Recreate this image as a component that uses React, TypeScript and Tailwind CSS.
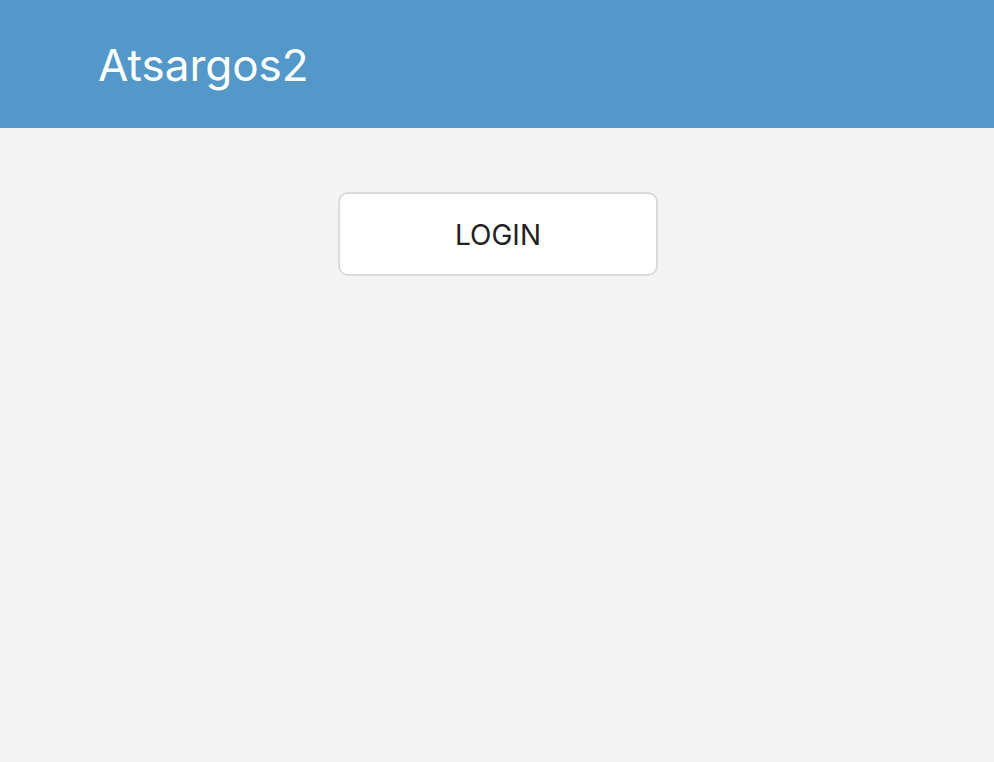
export default function App() {
  return (
    <div className="min-h-[762px] bg-[#f4f4f4] font-['Inter',sans-serif]">
      <header className="flex h-[128px] items-center bg-[#5398c9] px-[98px]">
        <h1 className="pt-[2px] text-[44px] font-normal leading-none text-white">Atsargos2</h1>
      </header>
      <main className="flex justify-center pl-[2px] pt-[64px]">
        <button className="h-[84px] w-[320px] rounded-[10px] border-2 border-[#dadada] bg-white pt-[2px] text-[28px] text-[#222]">
          LOGIN
        </button>
      </main>
    </div>
  );
}
